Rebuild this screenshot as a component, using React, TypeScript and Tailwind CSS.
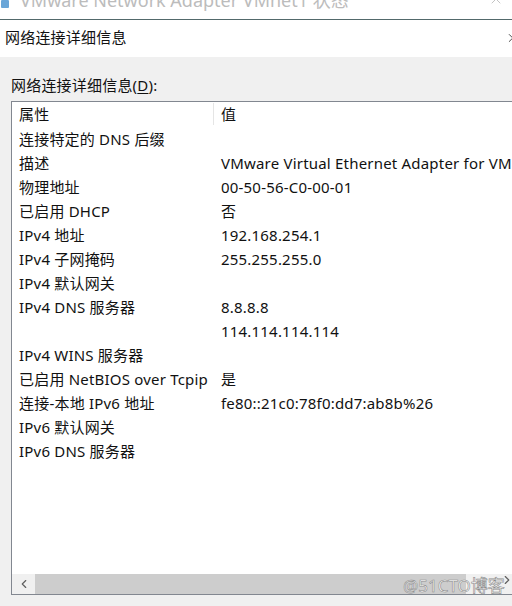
import { ChevronLeft, ChevronRight, ChevronUp } from "lucide-react";

const rows: [string, string][] = [
  ["连接特定的 DNS 后缀", ""],
  ["描述", "VMware Virtual Ethernet Adapter for VMnet1"],
  ["物理地址", "00-50-56-C0-00-01"],
  ["已启用 DHCP", "否"],
  ["IPv4 地址", "192.168.254.1"],
  ["IPv4 子网掩码", "255.255.255.0"],
  ["IPv4 默认网关", ""],
  ["IPv4 DNS 服务器", "8.8.8.8"],
  ["", "114.114.114.114"],
  ["IPv4 WINS 服务器", ""],
  ["已启用 NetBIOS over Tcpip", "是"],
  ["连接-本地 IPv6 地址", "fe80::21c0:78f0:dd7:ab8b%26"],
  ["IPv6 默认网关", ""],
  ["IPv6 DNS 服务器", ""],
];

const font = { fontFamily: '"Noto Sans", "Noto Sans CJK SC", sans-serif' };

export default function App() {
  return (
    <div className="relative h-[606px] w-[512px] overflow-hidden bg-[#f0f0f0] text-[15px] tracking-[0.2px] text-[#111]" style={font}>
      {/* title bar */}
      <div className="flex h-[19px] items-start overflow-hidden bg-white">
        <div className="ml-[1px] h-[8px] w-[8px] rounded-[1px] bg-[#6aa6d8]" />
        <div className="ml-[11px] -mt-[13px] whitespace-nowrap text-[18px] tracking-normal text-[#bcbcbc]">
          VMware Network Adapter VMnet1 状态
        </div>
        <ChevronUp className="ml-auto mr-[8px] -mt-[7px] text-[#c4c4c4]" size={16} strokeWidth={1.5} />
      </div>
      <div className="h-px bg-[#52696b]" />
      <div className="flex h-[37px] items-center bg-white pb-[2px] pl-[5px]">
        <span>网络连接详细信息</span>
        <ChevronRight className="ml-auto -mr-[6px] text-[#333]" size={14} strokeWidth={1.5} />
      </div>

      <div className="px-[11px] pt-[17px]">
        <div className="mb-[5px] h-[22px] leading-[22px]">
          网络连接详细信息(<span className="underline underline-offset-2">D</span>):
        </div>
        <div className="-mr-[20px] flex h-[494px] flex-col border border-[#828790] bg-white">
          <div className="flex h-[25px] items-end pb-[2px]">
            <div className="w-[202px] border-r border-[#e5e5e5] pl-[7px] leading-[22px]">属性</div>
            <div className="pl-[7px] leading-[22px]">值</div>
          </div>
          {rows.map(([k, v], i) => (
            <div key={i} className="flex h-[24px] items-center whitespace-nowrap">
              <div className="w-[202px] shrink-0 pl-[7px]">{k}</div>
              <div className="pl-[7px]">{v}</div>
            </div>
          ))}
          <div className="mt-auto flex h-[20px] items-stretch bg-[#f0f0f0]">
            <div className="flex w-[23px] items-center justify-center">
              <ChevronLeft className="text-[#606060]" size={14} strokeWidth={2} />
            </div>
            <div className="w-[431px] bg-[#cdcdcd]" />
            <div className="flex-1" />
          </div>
        </div>
      </div>

      <ChevronRight className="absolute left-[500px] top-[573px] text-[#606060]" size={14} strokeWidth={2} />
      <div
        className="absolute left-[403px] top-[573px] text-[17px] tracking-normal text-white"
        style={{ WebkitTextStroke: "0.6px #8a8a8a" }}
      >
        @51CTO博客
      </div>
    </div>
  );
}
